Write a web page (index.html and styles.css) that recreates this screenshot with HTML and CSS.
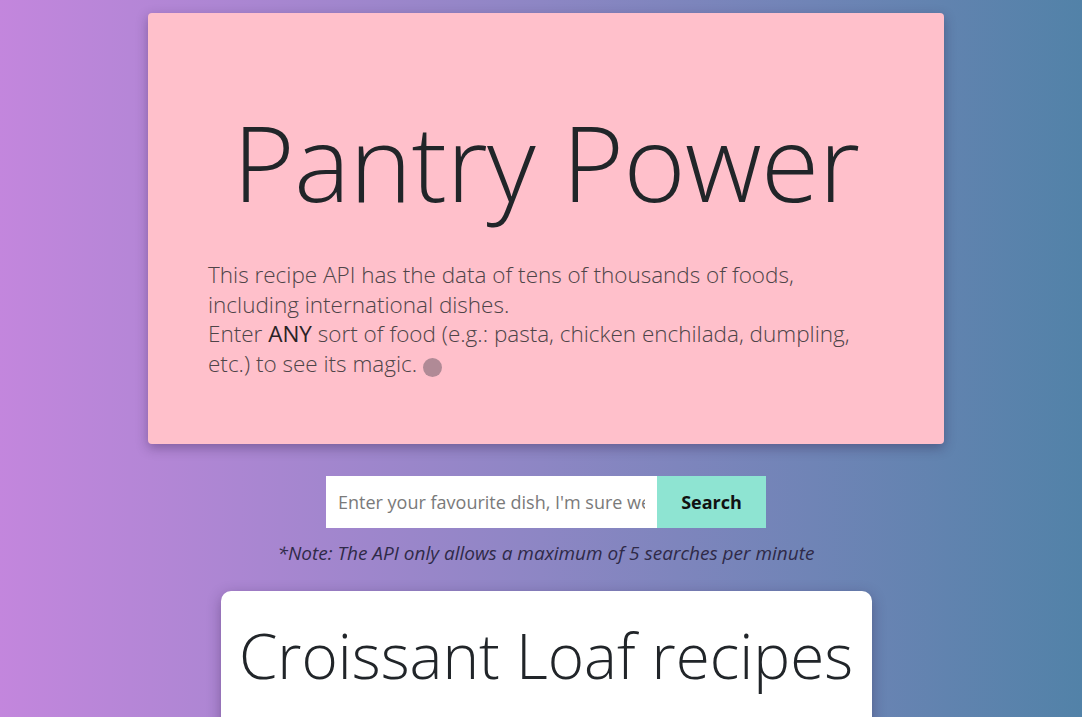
FILE: index.html
```html
<!DOCTYPE html>
<html lang="en">
<head>
<meta charset="utf-8">
<title>Pantry Power</title>
<link rel="stylesheet" href="styles.css">
</head>
<body>
<main class="page">
  <section class="hero">
    <h1 class="hero-title">Pantry Power</h1>
    <p class="hero-lead">This recipe API has the data of tens of thousands of foods, including international dishes.<br>Enter <strong>ANY</strong> sort of food (e.g.: pasta, chicken enchilada, dumpling, etc.) to see its magic. <span class="emoji-dot"></span></p>
  </section>
  <form class="search">
    <input class="search-input" type="text" placeholder="Enter your favourite dish, I'm sure we have it!">
    <button class="search-btn" type="button">Search</button>
  </form>
  <p class="note">*Note: The API only allows a maximum of 5 searches per minute</p>
  <section class="results">
    <h2 class="results-title">Croissant Loaf recipes</h2>
  </section>
</main>
</body>
</html>
```
FILE: styles.css
```css
html, body {
  margin: 0;
  padding: 0;
  height: 100%;
}
body {
  background: linear-gradient(90deg, #c386dd 0%, #8d86c4 50%, #5282a8 100%);
  font-family: "Open Sans", "Noto Sans", sans-serif;
  color: #212529;
  overflow: hidden;
}
.page {
  display: flex;
  flex-direction: column;
  align-items: center;
  padding: 13px 0 0 10px;
}
.hero {
  box-sizing: border-box;
  width: 796px;
  height: 431px;
  background: #ffc0cb;
  border-radius: 4px;
  box-shadow: 0 4px 12px rgba(40, 20, 60, 0.35);
  padding: 89px 60px 0;
}
.hero-title {
  margin: 0;
  text-align: center;
  font-weight: 300;
  font-size: 106px;
  line-height: 118px;
  color: #212529;
  letter-spacing: -0.6px;
}
.hero-lead {
  margin: 40px 0 0;
  max-width: 668px;
  font-size: 22.5px;
  font-weight: 300;
  line-height: 29.5px;
  color: #4e4448;
}
.hero-lead strong {
  font-weight: 500;
  color: #2a2326;
}
.emoji-dot {
  display: inline-block;
  width: 19px;
  height: 19px;
  border-radius: 50%;
  background: #b08a96;
  vertical-align: -5px;
}
.search {
  display: flex;
  margin: 32px 0 0;
}
.search-input {
  box-sizing: border-box;
  width: 331px;
  height: 52px;
  border: none;
  outline: none;
  padding: 0 12px;
  font-family: "Open Sans", sans-serif;
  font-size: 18px;
  background: #fff;
}
.search-input::placeholder {
  color: #7a7a7a;
}
.search-btn {
  box-sizing: border-box;
  width: 109px;
  height: 52px;
  border: none;
  background: #8ee4d2;
  font-family: "Open Sans", sans-serif;
  font-weight: 700;
  font-size: 18px;
  color: #111;
}
.note {
  margin: 12px 0 0;
  font-style: italic;
  font-size: 19px;
  line-height: 26px;
  color: #2f2a48;
}
.results {
  box-sizing: border-box;
  width: 651px;
  height: 200px;
  margin-top: 25px;
  background: #fff;
  border-radius: 10px;
  box-shadow: 0 4px 14px rgba(40, 20, 60, 0.35);
  padding-top: 22px;
}
.results-title {
  margin: 0;
  text-align: center;
  font-weight: 300;
  font-size: 62px;
  line-height: 84px;
  color: #212529;
}
```
